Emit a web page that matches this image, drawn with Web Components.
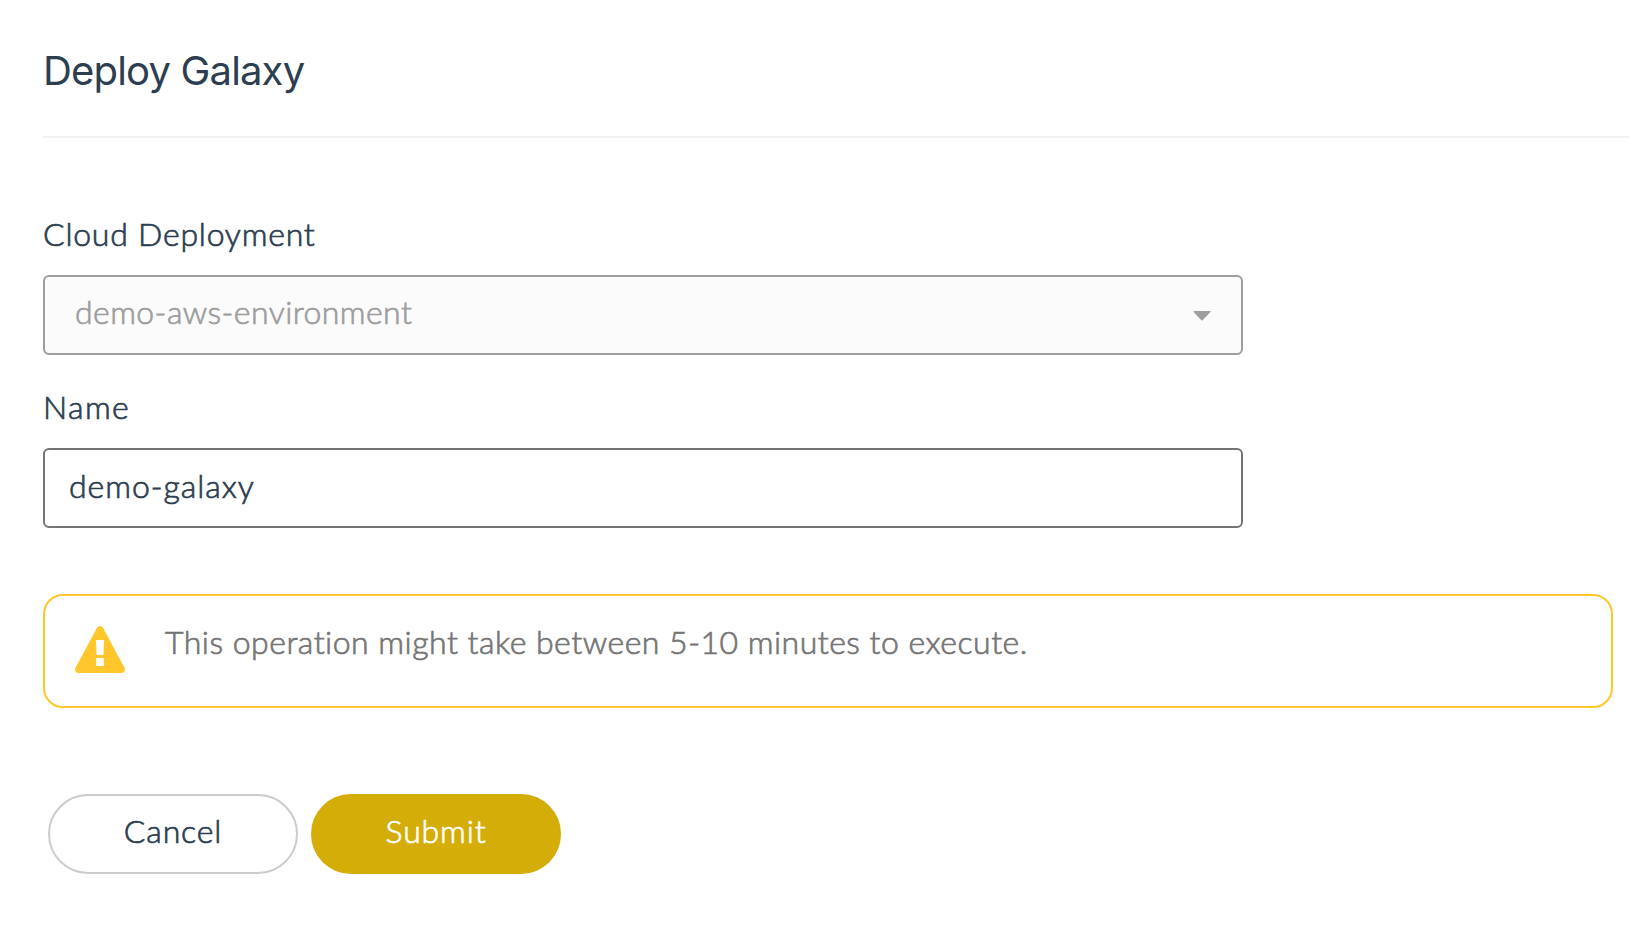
<!DOCTYPE html>
<html lang="en">
<head>
<meta charset="utf-8">
<title>Deploy Galaxy</title>
<style>
  body { margin: 0; background: #fff; }
</style>
</head>
<body>
<deploy-page></deploy-page>

<script>
const define = (name, html) => {
  const template = document.createElement('template');
  template.innerHTML = html;
  customElements.define(name, class extends HTMLElement {
    constructor() {
      super();
      this.attachShadow({ mode: 'open' }).append(template.content.cloneNode(true));
    }
  });
};

define('page-heading', `
  <style>
    :host { display: block; padding-bottom: 41px; border-bottom: 2px solid #f0f0f0; }
    h1 { margin: 0; font: 400 40px/49px Inter, sans-serif; letter-spacing: -.83px; color: #2c3e50; -webkit-text-stroke: 0; }
  </style>
  <h1><slot></slot></h1>`);

define('form-field', `
  <style>
    :host { display: flex; flex-direction: column; gap: 17px; width: 1200px; }
    .label { line-height: 48px; letter-spacing: var(--label-spacing, 0); }
    .box {
      box-sizing: border-box; height: 80px; display: flex; align-items: center; justify-content: space-between;
      border: 2px solid #757575; border-radius: 6px; padding: 0 24px 5px; letter-spacing: var(--value-spacing, 0);
    }
    :host([disabled]) .box { background: #fbfbfb; border-color: #9e9e9e; color: #9e9e9e; padding: 0 30px 7px; }
    .arrow { display: none; }
    :host([disabled]) .arrow { display: block; margin-top: 8px; }
  </style>
  <div class="label"><slot name="label"></slot></div>
  <div class="box">
    <span><slot></slot></span>
    <svg class="arrow" width="18" height="10" viewBox="0 0 18 10"><path d="M1 0h16q1 .3.4 1L9.6 9.3q-.6.6-1.2 0L.6 1Q0 .3 1 0z" fill="#9e9e9e"/></svg>
  </div>`);

define('warning-alert', `
  <style>
    :host {
      box-sizing: border-box; display: flex; align-items: flex-start; gap: 40px; height: 114px; width: 1570px;
      border: 2px solid #ffc72b; border-radius: 20px; padding: 0 30px; color: #757575; letter-spacing: .49px;
    }
    svg { display: block; margin-top: 30px; }
    p { margin: 22px 0 0; line-height: 48px; }
  </style>
  <svg width="50" height="47" viewBox="0 0 50 47">
    <path fill="#ffc72b" fill-rule="evenodd" d="M22 1.8Q25-1.8 28 1.8L49.6 42Q51 46 47 47H3Q-1 46 .4 42ZM21 14l.5 15h7l.5-15ZM21.2 32v8h7.6v-8Z"/>
  </svg>
  <p><slot></slot></p>`);

define('pill-button', `
  <style>
    :host { display: block; }
    button {
      box-sizing: border-box; width: 250px; height: 80px; border-radius: 40px; border: 2px solid #ccc;
      display: flex; align-items: center; justify-content: center; padding: 0 0 7px; margin: 0;
      background: #fff; color: inherit; font: inherit; letter-spacing: .85px; -webkit-text-stroke: inherit;
    }
    :host([primary]) button { background: #d5ad08; border-color: #d5ad08; color: #fff; }
  </style>
  <button type="button"><slot></slot></button>`);

define('deploy-page', `
  <style>
    :host {
      box-sizing: border-box; display: block; width: 1646px; height: 946px; padding: 46px 17px 0 43px;
      font: 300 32px/48px Lato, sans-serif; color: #2c3e50; -webkit-text-stroke: .7px; font-variant-ligatures: none;
    }
    form-field:first-of-type { margin-top: 72px; --label-spacing: .77px; --value-spacing: .42px; }
    form-field:last-of-type { margin-top: 28px; --label-spacing: 1.4px; --value-spacing: .95px; }
    warning-alert { margin-top: 66px; }
    .actions { display: flex; gap: 13px; padding-left: 5px; margin-top: 86px; }
  </style>
  <page-heading>Deploy Galaxy</page-heading>
  <form-field disabled><span slot="label">Cloud Deployment</span>demo-aws-environment</form-field>
  <form-field><span slot="label">Name</span>demo-galaxy</form-field>
  <warning-alert>This operation might take between 5-10 minutes to execute.</warning-alert>
  <div class="actions">
    <pill-button>Cancel</pill-button>
    <pill-button primary>Submit</pill-button>
  </div>`);
</script>
</body>
</html>
